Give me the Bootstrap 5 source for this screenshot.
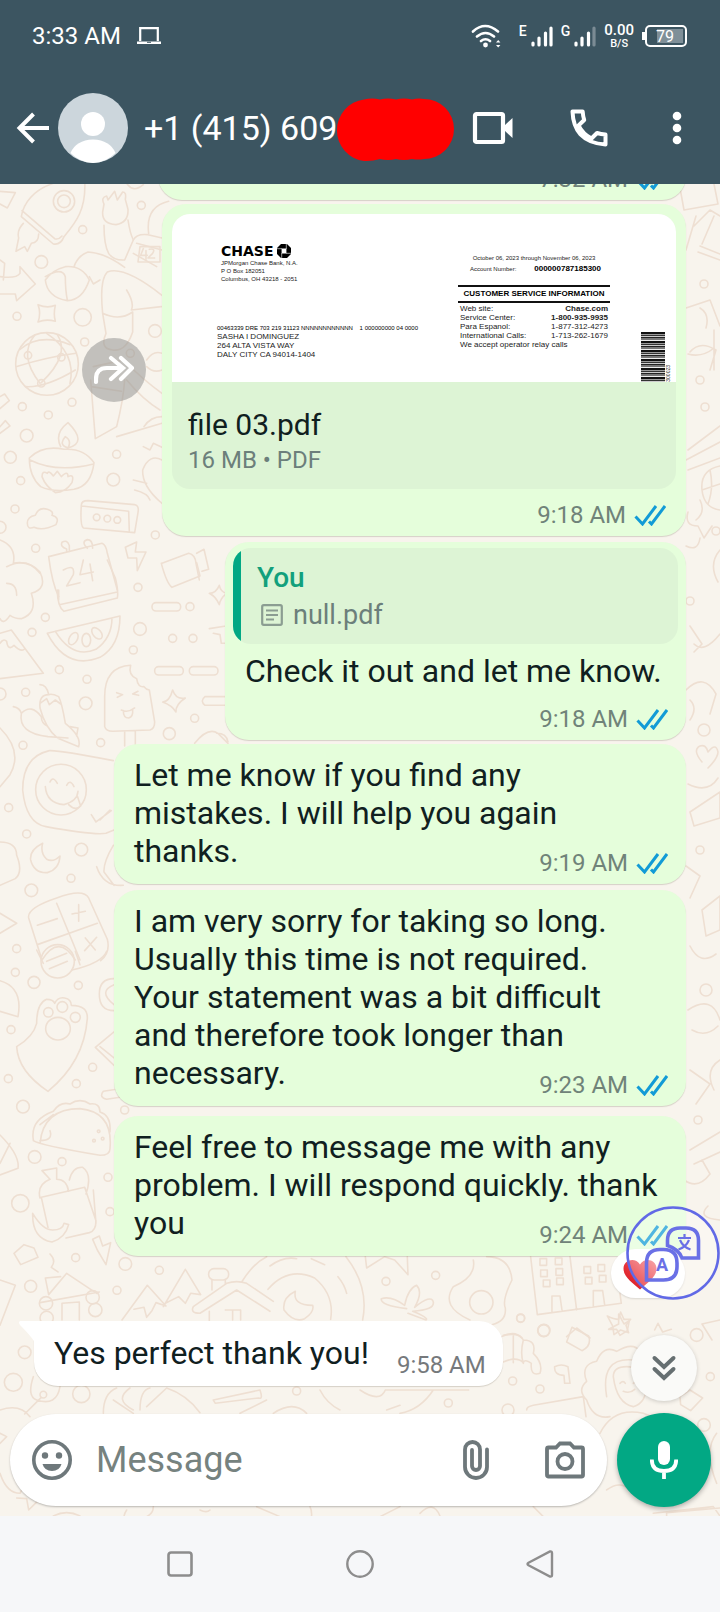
<!DOCTYPE html>
<html lang="en">
<head>
<meta charset="utf-8">
<meta name="viewport" content="width=device-width, initial-scale=1">
<title>Chat</title>
<link href="https://cdn.jsdelivr.net/npm/bootstrap@5.3.0/dist/css/bootstrap.min.css" rel="stylesheet">
<style>
  body { font-family: Roboto, "Liberation Sans", sans-serif; background: #f8f4ed; color: #10201f; }
  svg { display: block; flex-shrink: 0; }
  button { border: 0; background: none; padding: 0; color: inherit; flex-shrink: 0; }
  .top-area { background: #3c5561; color: #fff; }
  .status-row { height: 72px; padding-left: 32px; padding-right: 32px; font-size: 24px; line-height: 28px; }
  .status-row .net { font-size: 14px; line-height: 16px; font-weight: 500; }
  .status-row .rate { font-size: 15px; line-height: 15px; font-weight: 500; }
  .status-row .rate small { font-size: 11px; line-height: 12px; }
  .app-row { height: 112px; padding: 0 38px 0 16px; }
  .phone-no { font-size: 34px; line-height: 40px; font-weight: 400; white-space: nowrap; }
  .redaction { margin: 4px 0 0 -4px; }
  .chat-area { flex: 1 1 0; min-height: 0; }
  .wallpaper { position: absolute; left: 0; top: 0; width: 100%; height: 100%; }
  .messages { padding: 0 34px; gap: 4px; }
  .bubble { position: relative; background: #e5fedb; border-radius: 24px; box-shadow: 0 1px 1px rgba(60,50,30,.18); font-size: 32px; line-height: 38px; max-width: 100%; }
  .bubble-text { padding: 12px 18px 7px 20px; width: 572px; }
  .bubble-text p, .bubble-quote p { margin: 0; white-space: nowrap; }
  .bubble-early { height: 140px; width: 528px; padding: 0 18px 7px; }
  .stamp { font-size: 24px; line-height: 28px; color: #708379; display: flex; justify-content: flex-end; align-items: center; gap: 8px; }
  .bubble-text .stamp { margin-top: -21px; }
  .bubble-file { width: 524px; padding: 10px 10px 7px; }
  .bubble-file .stamp { padding: 12px 10px 0 0; }
  .file-box { background: #ddf4d5; border-radius: 18px; overflow: hidden; }
  .file-info { padding: 23px 16px 14px; }
  .file-title { font-size: 30px; line-height: 40px; }
  .file-kind { font-size: 24px; line-height: 30px; color: #6c7f7b; }
  .bubble-quote { width: 461px; padding: 6px 8px 7px; }
  .bubble-quote > p { padding: 8px 12px 0; }
  .bubble-quote .stamp { padding: 15px 10px 0 0; }
  .quote-box { background: linear-gradient(to right, #02a884 8px, #ddf4d5 8px); border-radius: 18px; padding: 12px 16px 10px 24px; }
  .quote-who { color: #12a07c; font-size: 28px; line-height: 36px; font-weight: 500; }
  .quote-what { color: #6c7f7b; font-size: 27px; line-height: 38px; gap: 10px; }
  .bubble-in { background: #fff; border-top-left-radius: 0; margin: 61px 0 27px; padding: 13px 17px 14px 20px; }
  .bubble-in p { margin: 0; line-height: 38px; }
  .bubble-in .stamp { color: #76797c; margin-bottom: -7px; }
  .tail { position: absolute; left: -16px; top: 0; }
  .gap-two { margin-top: 2px; }
  .gap-six { margin-top: 6px; }

  .paper { background: #fff; color: #222; height: 168px; padding: 29px 5px 0 45px; font-family: "Liberation Sans", Arial, sans-serif; font-size: 6px; line-height: 8px; white-space: nowrap; }
  .brand { font-family: "DejaVu Sans", sans-serif; font-weight: 700; font-size: 14px; line-height: 16px; color: #000; gap: 4px; padding-left: 4px; }
  .paper-left { width: 241px; }
  .paper-right { width: 152px; padding-top: 11px; }
  .mail-code { margin-top: 41px; color: #000; }
  .mail-to { font-size: 8px; line-height: 9px; }
  .account { margin-top: 2px; padding: 0 9px 0 12px; }
  .info-head { font-size: 8px; line-height: 12px; border-top: 2px solid #111; border-bottom: 2px solid #111; margin-top: 12px; text-align: center; font-weight: 700; padding: 1px 0; color: #000; }
  .info-grid { width: 100%; font-size: 8px; line-height: 9px; margin: 1px 0 0; }
  .info-grid th { font-weight: 400; padding: 0 0 0 2px; }
  .info-grid td { padding: 0 2px 0 0; text-align: right; }
  .bars { width: 24px; height: 50px; background: repeating-linear-gradient(#111 0 2px, #999 2px 3px, #333 3px 4px, #ccc 4px 5px, #222 5px 6px, #777 6px 8px, #eee 8px 9px); }
  .bars-no { writing-mode: vertical-rl; transform: rotate(180deg); font-size: 5px; line-height: 6px; }

  .forward-btn { width: 64px; height: 64px; border-radius: 50%; background: rgba(150,150,148,.55); margin-right: 16px; display: grid; place-items: center; }
  .reaction { position: absolute; right: 1px; bottom: -42px; width: 74px; height: 49px; border-radius: 25px; background: #fff; padding: 10px 0 0 12px; box-shadow: 0 1px 2px rgba(0,0,0,.12); }
  .translate-fab { position: absolute; right: -34px; bottom: -44px; width: 94px; height: 94px; }
  .composer { position: relative; padding: 0 9px 9px 10px; gap: 10px; }
  .entry { background: #fff; border-radius: 46px; height: 92px; padding: 0 22px; box-shadow: 0 1px 2px rgba(0,0,0,.25); color: #6e787b; flex: 1 1 0; min-width: 0; }
  .entry input { border: 0; outline: 0; background: none; font-size: 36px; line-height: 42px; flex: 1 1 0; min-width: 0; padding: 0 0 0 24px; color: #10201f; }
  .entry input::placeholder { color: #76827f; opacity: 1; }
  .mic-btn { width: 94px; height: 94px; border-radius: 50%; background: #02a884; color: #fff; box-shadow: 0 2px 5px rgba(0,0,0,.3); display: grid; place-items: center; }
  .down-btn { position: absolute; right: 23px; bottom: 115px; width: 66px; height: 66px; border-radius: 50%; background: #fafaf8; box-shadow: 0 1px 4px rgba(0,0,0,.18); display: grid; place-items: center; color: #666f71; }
  .sys-nav { background: #f6f7f9; height: 96px; padding: 0 93px; color: #8d8d8d; }
  .sys-nav button { width: 174px; display: grid; place-items: center; flex: 0 1 174px; }
</style>
</head>
<body class="vh-100 d-flex flex-column overflow-hidden">

<svg width="0" height="0" class="position-absolute" aria-hidden="true">
  <symbol id="ticks" viewBox="0 0 32 22"><path d="M1.500 12.500l7 7.500L22 2M15 17.500l2.500 2.500L31 2" fill="none" stroke="#129bd6" stroke-width="3"/></symbol>
</svg>

<header class="top-area">
  <div class="status-row d-flex align-items-center">
    <span>3:33 AM</span>
    <svg class="ms-3" width="24" height="18" viewBox="0 0 24 18"><path d="M3.200 14V1.200h17.600V14" fill="none" stroke="#fff" stroke-width="2.200"/><path d="M0 14.500h24V17H0z" fill="#fff"/><path d="M10 15.300h4" stroke="#3c5561"/></svg>
    <div class="ms-auto d-flex align-items-center">
      <svg width="32" height="24" viewBox="0 0 32 24"><g fill="none" stroke="#fff" stroke-width="2.600" stroke-linecap="round"><path d="M2 7.500q12-11 25 0M6 12.500q8.500-7 17 0M10 17q4.500-3.500 9 0"/></g><circle cx="14.500" cy="21" r="2.400" fill="#fff"/><path d="M25 18.500l2.200-2.500 2.200 2.500zM25 21l2.200 2.500 2.200-2.500z" fill="#fff"/></svg>
      <span class="net align-self-start ms-3">E</span>
      <svg class="ms-1" width="22" height="22" viewBox="0 0 22 22"><path d="M2 20v-2M8 20v-7M14.500 20V8M20 20V3" stroke="#fff" stroke-width="3.200" stroke-linecap="round"/></svg>
      <span class="net align-self-start ms-2">G</span>
      <svg class="ms-1" width="22" height="22" viewBox="0 0 22 22"><path d="M2 20v-2M8 20v-7M14.500 20V8" stroke="#fff" stroke-width="3.200" stroke-linecap="round"/><path d="M20 20V3" stroke="#7b8b94" stroke-width="3.200" stroke-linecap="round"/></svg>
      <span class="rate text-center ms-2 d-flex flex-column">0.00<small>B/S</small></span>
      <svg class="ms-2" width="46" height="22" viewBox="0 0 46 22"><rect x="4" y="1" width="40" height="20" rx="4" fill="none" stroke="#fff" stroke-width="2"/><path d="M1.500 7v8" stroke="#fff" stroke-width="3"/><path d="M15 4h26v14H15z" fill="#7f8f98"/><text x="23" y="17" text-anchor="middle" font-size="16" fill="#fff">79</text></svg>
    </div>
  </div>
  <div class="app-row d-flex align-items-center">
    <button aria-label="Back"><svg width="34" height="34" viewBox="0 0 34 34"><path d="M17.500 3L3.500 17l14 14M3.500 17H33" fill="none" stroke="#fff" stroke-width="4"/></svg></button>
    <svg class="ms-2" width="70" height="70" viewBox="0 0 70 70"><circle cx="35" cy="35" r="35" fill="#ccd6dc"/><circle cx="35" cy="31" r="12" fill="#fff"/><path d="M12.500 60Q18 47 35 46.500 52 47 57.500 60 48 69.500 35 70 22 69.500 12.500 60z" fill="#fff"/></svg>
    <h1 class="phone-no mb-0 ms-3">+1 (415) 609</h1>
    <svg class="redaction" width="122" height="64" viewBox="0 0 122 64" aria-hidden="true"><path d="M31 1.500q8-2 16 0 8-2 16 0 8-2 16 0 6-1.500 12-.5A30 30 0 0 1 91 61q-6 1-12 0-8 2-16 0-8 2-16 0-8 2.500-16 2A31 31 0 0 1 31 1.500z" fill="#f00"/></svg>
    <button class="ms-auto" aria-label="Video call"><svg width="42" height="34" viewBox="0 0 42 34"><rect x="3" y="3" width="28" height="28" rx="1.500" fill="none" stroke="#fff" stroke-width="4.200"/><path d="M32 15l8.500-8v20L32 19z" fill="#fff"/></svg></button>
    <button class="ms-5 ps-2" aria-label="Call"><svg width="38" height="38" viewBox="0 0 38 38"><path d="M2.500 2.500h10.200q.3 5 1.500 8.500L8.500 16.500Q13 25.500 21.500 29.500L27 24q4 1.300 8.500 1.500v10Q19 34.500 10.500 25.500 3 17 2.500 2.500z" fill="none" stroke="#fff" stroke-width="4" stroke-linejoin="round"/></svg></button>
    <button class="ms-5 ps-3" aria-label="More options"><svg width="10" height="34" viewBox="0 0 10 34"><g fill="#fff"><circle cx="5" cy="5" r="4.300"/><circle cx="5" cy="17" r="4.300"/><circle cx="5" cy="29" r="4.300"/></g></svg></button>
  </div>
</header>

<main class="chat-area position-relative overflow-hidden d-flex flex-column justify-content-end">
  <svg class="wallpaper" viewBox="0 184 720 1332" preserveAspectRatio="xMidYMin slice" aria-hidden="true">
    <g fill="none" stroke="#eedfd2" stroke-width="4.800" stroke-linejoin="round" stroke-linecap="round">
      <!-- rocket, athlete, globe, lamp, cloud -->
      <g transform="translate(0 180) scale(.3333)">
        <path d="M160 10C100 30 70 70 64 110L160 192Q182 196 192 170C225 130 260 90 254 0M66 92l98 84q12 4 22-8M70 130q-20 20-14 44l-8 40 26-14 8 14 12-24q22-2 22-28"/>
        <circle cx="192" cy="64" r="32"/><circle cx="192" cy="64" r="19"/><circle cx="248" cy="149" r="12"/><circle cx="424" cy="76" r="12"/>
        <path d="M0 34l46 4-24 46-22-12M380 10q20 30 50 4M312 72q-10-20 8-24l4 12 20-26 8 26 16-24q12 0 8 22l8 30q2 40-36 46-42-2-40-38zM312 136q0 60 14 84 14 22 48 20l26-60q-10-20-16-60"/>
        <path d="M400 180q10-20 44-16l42 10M410 190l76 20M400 220l70 40M374 262q-60-44-110-46-30 10-42 44M136 300q20-30 60-40 50-4 72 40-20 60-66 62-60-10-66-62zM136 290q50-30 60 0 0 40 6 70"/>
        <path d="M268 290l12 22 20-12M308 400q-10-100 14-124 50-20 164 70M380 330q24 40 14 60l90-10M308 400q50 24 90-4v60q-20 60-60 54-40-4-20-50l-10-60M446 160q-10-80 60-96M420 200h60v46h-66zM430 206l-8 20h20m-4-14v26m10-30q20-4 10 12l-14 14h20"/>
        <circle cx="124" cy="246" r="19"/><path d="M0 290q50 6 60-10l0-20 46 52-56 50-4-20H0M0 240l14 10-4 50"/>
        <path d="M114 374q28 12 52 2-6 26 0 48-28-8-52 2 10-26 0-52z"/><circle cx="51" cy="409" r="12"/><circle cx="248" cy="412" r="26"/><circle cx="465" cy="453" r="19"/><circle cx="254" cy="486" r="12"/><circle cx="391" cy="520" r="12"/>
        <circle cx="141" cy="552" r="94"/><path d="M60 508q60-50 150-14M48 560q100-30 180-40M76 620q60 4 150-50M104 466q-50 60 16 144M172 464q40 60-48 144M140 460q90 60 70 150"/><circle cx="84" cy="526" r="11"/><circle cx="184" cy="532" r="11"/><circle cx="124" cy="610" r="11"/>
        <path d="M280 560l90-20q60 60 116 100M272 600l14 176 64-36q20-80 24-140M274 620l90 14M350 770l136-40M380 600q50 60 100 90M440 540q20-30 46-20M440 560q20 20 46 10"/>
        <circle cx="67" cy="680" r="12"/><circle cx="216" cy="667" r="12"/><circle cx="145" cy="705" r="12"/><circle cx="80" cy="767" r="19"/><circle cx="31" cy="832" r="18"/><circle cx="62" cy="902" r="12"/><circle cx="350" cy="823" r="12"/><circle cx="45" cy="987" r="12"/><circle cx="466" cy="1065" r="12"/><circle cx="107" cy="1105" r="12"/><circle cx="0" cy="1042" r="18"/>
        <path d="M0 650l14-8 14 20-28 24M0 740l16-18 14 16-30 22M182 800q-20-40 22-72 60 60 0 76q-30-10-8-34 20 12 8 34M88 834q40-40 104-26 60-4 90 40-8 70-60 80-64 10-100-8-34-30-34-86zM90 840q80 40 190 12M126 890q0-20 16-10 4-10 18 8l12-14 12 16q20-20 20 0 20-10 12 18-20 30-50 30-30-20-40-48z"/>
        <circle cx="340" cy="899" r="19"/><path d="M486 970q-60-50-58-100 20-50 58-30M400 900l40 10M404 930q40 10 46 30M430 800l20 10 10-20 26 12M432 740q20-30 54-30"/>
        <path d="M82 1030q0-20 24-24 10-26 36-18 20 6 14 18 24 6 12 28-40 20-66 8-20 8-20-12zM244 976q0-14 20-14l140 12q14 2 10 24l-10 60-154-14q-10-8-6-68zM246 978l140 16 2 60"/><circle cx="290" cy="1012" r="10"/><circle cx="322" cy="1016" r="10"/><circle cx="352" cy="1020" r="10"/>
        <path d="M0 1080q50 20 40 70 50-10 80 30M146 1130l160-40q12 4 16 30l30 110M146 1130q10 80 30 120M200 1115v-8q-20-6-14-20 16-10 22 10v18M262 1105q-20-20 0-26 16 0 16 26M376 1102l34-16-4 30h32l-26 56-2-38h-26zM486 1150l80-30q20 4 22 30l10 50M590 1120l22-12 14 60-20 6"/>
      </g>
      <!-- calendar, melon, lolly, chillies, calculator -->
      <g transform="translate(0 560) scale(.3333)">
        <path d="M20 20q60-30 100 16 24 50-26 64 20 60-30 76-20 0-34-10-20 30-30 10M20 70q30 0 30 36M0 220l34-10 96 130L0 356M0 250q10-16 20-6 4 30 22 12 20 20 30 12M172 90q0 50 20 64l160-40q4-20-6-60l-24-54M178 134l174-38M176 90l0 30M190 30q36-20 30 14l-20 34 40-10M250 0l-10 44 40-8m-10-24l8 50"/>
        <path d="M142 220l218-52q0 90-60 124-100 40-158-72zM166 214l170-40q0 60-48 94-70 30-122-54"/><ellipse cx="220" cy="236" rx="12" ry="20" transform="rotate(30 220 236)"/><ellipse cx="259" cy="240" rx="13" ry="20"/><ellipse cx="291" cy="220" rx="12" ry="20" transform="rotate(-40 291 220)"/>
        <circle cx="414" cy="82" r="12"/><circle cx="136" cy="172" r="12"/><circle cx="96" cy="217" r="12"/><circle cx="420" cy="207" r="19"/><circle cx="400" cy="270" r="12"/><circle cx="178" cy="329" r="12"/><circle cx="261" cy="358" r="12"/><circle cx="77" cy="397" r="12"/><circle cx="257" cy="430" r="19"/><circle cx="570" cy="140" r="12"/><circle cx="518" cy="235" r="12"/><circle cx="579" cy="235" r="12"/><circle cx="584" cy="475" r="12"/><circle cx="508" cy="521" r="18"/><circle cx="302" cy="548" r="12"/><circle cx="69" cy="556" r="12"/><circle cx="0" cy="402" r="18"/>
        <rect x="456" y="128" width="86" height="25" rx="12"/><rect x="464" y="320" width="86" height="25" rx="12"/><rect x="568" y="320" width="86" height="25" rx="12"/><path d="M675 410h-60q-16 13 0 26h60M484 10q16 60 32 72l84-34-10-40M628 100q20 0 30-24 4 20 22 24-20 16-22 34-10-24-30-34zM628 206l50-8M640 220l20 4 4 26 14 0M488 426q20 0 30-36 10 30 38 24-30 20-28 42-12-20-40-30z"/>
        <path d="M314 500l0-90q0-90 78-94-8 30 18 40 4 28 22 24 6 8 16 10l16 96q0 20-14 24l-112 4q-20 0-24-14zM374 516v42M406 514v44M350 398l18 6-16 8M414 394l-16 8 18 4M364 450q20 10 40-6M370 452q0 22 16 22 14-4 12-24M584 550q40-50 70-30l30 30M650 520q30 0 34 26"/>
        <path d="M40 440q20 4 24 20-10 60 80 70l60 4M64 460q30-30 60 10 0 20 20 30M120 374q20 0 26 30-30 0-26 40 16 60 52 90l64 26q10-30-40-70-10-60-20-80-20-10-30-6M120 430l20-14 8 18 18-14 16 12M210 500l24 4-4 24"/>
        <path d="M0 504q70 70 30 140L0 680M68 690q0-100 80-118 30-2 192 30M68 690q10 100 70 110 140 26 180 20l24-10"/><circle cx="183" cy="689" r="76"/><path d="M136 680q4 50 56 54 40-10 42-40M150 666q8-20 22 4M200 676q10-20 22 4M206 734q20 20 36 4l-10-30M274 764l14 22 46-34M300 780l30-30"/>
        <circle cx="26" cy="743" r="12"/><circle cx="80" cy="822" r="12"/><circle cx="244" cy="869" r="19"/><circle cx="213" cy="955" r="12"/><circle cx="94" cy="991" r="19"/><circle cx="50" cy="1166" r="12"/>
        <path d="M128 850q-40 20-36 50 10 40 50 38 36-10 38-50-20 20-40 10-20-20-12-48zM0 846q50 0 50 40 20 50-4 70l-46 20M340 856q-30 50-28 80l30 40M290 920q20 60 80 56M0 1060l50 30-50 30M170 1014q80-30 96 0l56 124q10 40-20 64M170 1014q-90 30-84 60l40 126M170 1030l70 170M112 1154l180-64M112 1096l60-20M236 1034l0 50M216 1062l40-8M256 1134l30 36M254 1172l36-40M126 1200q50-80 100 0"/>
      </g>
      <!-- paw shield, taco, groceries, winter houses -->
      <g transform="translate(0 950) scale(.3333)">
        <circle cx="173" cy="34" r="50"/><path d="M140 34l60-24M148 56l54-22M110 0l20 40M216 60q90-20 104-56M240 44l-14-40"/><circle cx="46" cy="67" r="12"/><circle cx="102" cy="97" r="18"/><circle cx="235" cy="106" r="12"/><path d="M0 92q70 20 54 108l-54-16M342 86q-44 0-44 46 0 50 44 50M342 104q-50 20 0 60"/>
        <path d="M110 220q0-60 30-72 20 0 24 12 10-20 30-16 20 4 20 22 50 0 48 40-10 130-118 218-90-60-94-134 50-30 60-70z"/><ellipse cx="174" cy="236" rx="37" ry="34"/><circle cx="145" cy="187" r="14"/><circle cx="187" cy="171" r="16"/><circle cx="226" cy="202" r="15"/>
        <circle cx="33" cy="239" r="12"/><circle cx="25" cy="386" r="12"/><circle cx="278" cy="352" r="12"/><circle cx="229" cy="401" r="12"/><circle cx="69" cy="470" r="19"/><circle cx="374" cy="480" r="12"/><circle cx="104" cy="621" r="19"/><circle cx="186" cy="635" r="12"/><circle cx="324" cy="682" r="12"/><circle cx="61" cy="760" r="26"/><circle cx="330" cy="785" r="12"/><circle cx="227" cy="923" r="12"/><circle cx="376" cy="942" r="19"/><circle cx="478" cy="961" r="12"/><circle cx="92" cy="1009" r="18"/><circle cx="351" cy="1021" r="12"/>
        <path d="M342 246l-56 46 56 54M300 290l42 34M350 418l-40 6q-14 18 10 24l40-6M100 570q-10-60 60-86 20-30 50-22 30-20 60 0 30-4 30 24 34 10 30 60M100 572q20 14 200 44 30 0 30-20 10-110-90-120-110 0-120 104M120 524l40-30M120 572q40 0 30-30M0 555q60 60 54 100l-54 20M0 640l30-60"/><circle cx="296" cy="544" r="4"/><circle cx="282" cy="572" r="4"/><circle cx="308" cy="566" r="4"/>
        <path d="M124 742l130-30 34 100q0 30-20 36l-70 16M120 744q-10-40 30-56l-24-26 44-8 0 34q30 0 36 36M208 690q10-40 40-38 30 20 10 80M124 742l20 90M280 720l8 100M98 790q30 50 60 50 30 0 34-20l14 4q-10 40-50 52-60-10-58-86zM278 868l20-10 10 30 24-10-14 66-26-44zM42 910l30-26 30 10 12 28-52 22zM150 912q20 20 4 40l20 14M136 984l10 50 54-64 90 60M136 984l46-4M120 1058l178-32M0 990l46 16-46 120"/><circle cx="138" cy="1060" r="20"/><circle cx="278" cy="1042" r="20"/><circle cx="140" cy="1104" r="20"/><circle cx="286" cy="1080" r="20"/><path d="M186 1110v-50l52-4v54"/>
        <path d="M366 1110l76-104 56 62-30-10-12 24-16 20-8-30-30 6M490 1070l66-112 46 76-30-4-16 30-20-20-40 20M636 990v30M676 988v14M580 1070q-10 20 20 20l110-70 100 64M580 1070l100-70q30-10 60 0l80 54M628 1084v30M676 1080h46v30M698 1080v30"/><rect x="626" y="956" width="60" height="34" rx="16"/>
      </g>
      <!-- moon ring, star, flower, fried egg, hotel -->
      <g transform="translate(200 1240) scale(.3333)">
        <path d="M125 126Q160 70 200 50M438 50q70 90 50 190M204 148q60-70 140-34 60 50 48 124M210 78q40-30 80-22M334 56l40 18M414 110q20 24 26 50M286 154q-40 20-34 56 30 40 62 26 30-20 24-40-60 0-52-42zM496 50l4 34 54-34 30 10 40 44-2-54M620 206q-80-10-76-30 30-10 70 20 10-50 36-60 20 20-6 66 50-40 56-16 4 24-62 28 50 20 40 26l-54-20M860 50q70 0 76 70-30 60-20 84 4 40-40 50M820 60q10 50-60 80-40 60 50 100"/><circle cx="558" cy="124" r="12"/><circle cx="707" cy="106" r="12"/><circle cx="844" cy="187" r="35"/><circle cx="962" cy="235" r="12"/><circle cx="1031" cy="272" r="18"/>
        <path d="M992 50l20 174 252-34-4-30M1110 50l20 160M1056 216v-48h24l6 42M1180 200v-48h28l6 42M1020 56h20v20h-20zM1066 54h20v20h-20zM1022 90h20v20h-20zM1068 86h20v20h-20zM1030 120h20v20h-20zM1070 114h20v20h-20zM1152 80h20v20h-20zM1194 74h20v20h-20zM1156 112h20v20h-20zM1198 106h20v20h-20zM1222 228q20 10 34 10l6-22 10 22 20 0-14 18 8 22-24-8-20 14-4-26zM1100 290l30-26 40 30M905 290q40-20 60 4"/>
      </g>
      <!-- croissant, singer, envelopes round the entry box -->
      <g transform="translate(360 1300) scale(.3333)">
        <path d="M430 106q50-10 60 14 40 0 30 40 30 30 20 60-30 10-26-30-20-14-24-2-20-20-60-2M460 108v80M490 120q-10 40 0 70M584 200q20-10 40 0l6 50h-16l-2-24q-30 0-28-26zM636 82l50 26q10 30-20 44l-46-26zM746 88l30-16 0-30 16 30 16-10-6 30-22 14-10-18zM884 90l10-20 14 26 26-8"/><circle cx="482" cy="54" r="12"/><circle cx="552" cy="91" r="18"/><circle cx="1010" cy="105" r="19"/><circle cx="458" cy="243" r="12"/><circle cx="540" cy="267" r="12"/><circle cx="265" cy="309" r="12"/><circle cx="444" cy="330" r="18"/><circle cx="1051" cy="230" r="12"/><circle cx="1032" cy="375" r="19"/>
        <path d="M680 300q-30-30 0-56-20-50 30-60 20-50 60-30 50-30 70 0M680 300q20 60 70 50M500 330q0-10 20-14l150-26 8 60M740 290q-20-120 80-110M760 230q10 80 60 90 40-10 40-70-20-50-60-50-40 0-40 30zM780 250q10-10 16 0M820 250q10-10 16 0M790 274q20 8 34-6M720 400q40-80 130-60l50 20M0 270q60 40 76 0h250M80 330l40-14M120 340q60-10 100-70M960 290l30-20 38 24-36 38-30-18zM740 570q40-30 70 0l60 40M520 620l30 30M880 640l180-20 20 28M920 648v-10l160-14M1070 400q-40 50 0 150M60 650l60-30M180 640q40-40 60 8"/>
      </g>
      <g transform="translate(0 1300) scale(.3333)">
        <circle cx="40" cy="247" r="27"/><circle cx="244" cy="282" r="26"/><circle cx="74" cy="157" r="19"/><circle cx="130" cy="284" r="10"/><circle cx="890" cy="273" r="12"/><path d="M100 230q-20 60 10 70 60 20 70-40M124 292l-50 50M0 330q60-20 90 20M310 340q0-60 40-76M400 330q-60-30-10-66M420 330q0-60 30-66M440 320l60-56q60 20 100 74M340 300l60 40M640 300l140-30q10 30-4 24l-130 16zM720 340q40-20 80-40M820 340q60-40 100 0M960 270q20 40 60 60M0 400l20 10-20 20M0 520q20 60 60 60l10-20M50 594l30 2 6 34 26-26M380 630q-20 30 10 40M440 650q20-10 20-30M600 630q20 10 30 0M770 620l70 30M930 620q10 20 0 50M160 648q40-20 80 0"/>
      </g>
      <!-- books, palm, basketball and hearts down the right margin -->
      <g stroke-width="1.600">
        <path d="M680 188l4 22 34-6-4-20M694 226l16-16 10 6M686 250l10-34M698 252l22 8M702 244l12-28M700 246l20 8M686 308l24-8 10 26M706 328q4-14-6-20M690 352q10-12 26-2l-6 20M688 354q14 4 26-6M714 370v-40M688 450l32-24M686 460l34-18M688 470l32-12M720 466q-20 4-18 24 2 18 18 20M702 490l18-6M710 470q4 18-2 34M688 512q-4 14 10 14l6 12 8-12M696 520q10-8 4-20M686 546q12 6 14-8M720 550q-12 14-2 32M690 626l12 18-8 8M694 644q10 10 26-10M686 690q18-18 30 4l-6 20M690 700q8 8 0 20M702 762q-10-12-2-16 6-2 8 6 8-10 10 0 0 6-10 16M688 784q20 10 30-6M690 812l30-20v26l-26 8zM686 866l14 10-10 22M702 910l18-14v34l-14 6zM690 946q10 20 26 8M688 1010q24-16 32 10M692 1030q14 8 26-4M690 1070l20 14-14 20M720 1060q-16 10-6 30M690 1150l30-18M694 1164l26-12M684 1180q14 10 26-6l-8-14M708 1206q-12 12 12 14M712 1340l-10-16 18-4"/>
        <circle cx="704" cy="284" r="4"/><circle cx="700" cy="380" r="4"/><circle cx="705" cy="407" r="4"/><circle cx="716" cy="531" r="4"/><circle cx="690" cy="601" r="4"/><circle cx="704" cy="730" r="6"/><circle cx="700" cy="850" r="4"/><circle cx="706" cy="990" r="6"/><circle cx="698" cy="1120" r="4"/>
      </g>
    </g>
  </svg>

  <section class="messages d-flex flex-column align-items-end position-relative" aria-label="Messages">
    <article class="bubble bubble-early d-flex flex-column justify-content-end">
      <div class="stamp">7:32 AM <svg width="32" height="22"><use href="#ticks"/></svg></div>
    </article>

    <div class="d-flex align-items-center mw-100">
      <button class="forward-btn" aria-label="Forward"><svg width="40" height="30" viewBox="0 0 40 30"><path d="M2 27v-3Q2 13 13 13h15M17 3l12 10-12 11M27 3l11 10-11 11" fill="none" stroke="#fff" stroke-width="4.200" stroke-linecap="round"/></svg></button>
      <article class="bubble bubble-file">
        <div class="file-box">
          <div class="paper d-flex">
            <div class="paper-left">
              <div class="brand d-flex align-items-center">CHASE <svg width="14" height="14" viewBox="0 0 14 14"><path d="M4 0h6l4 4v6l-4 4H4l-4-4V4z"/><path d="M4.600 4.600h4.800v4.800H4.600z" fill="#fff"/><path d="M0 4.700h5M9.300 0v5M14 9.300H9M4.700 14V9" stroke="#fff" stroke-width=".6"/></svg></div>
              <div class="ps-1">JPMorgan Chase Bank, N.A.<br>P O Box 182051<br>Columbus, OH 43218 - 2051</div>
              <div class="mail-code">00463339 DRE 703 219 31123 NNNNNNNNNNNN &nbsp; &nbsp;1 000000000 04 0000</div>
              <div class="mail-to">SASHA I DOMINGUEZ<br>264 ALTA VISTA WAY<br>DALY CITY CA 94014-1404</div>
            </div>
            <div class="paper-right">
              <div class="text-center">October 06, 2023 through November 06, 2023</div>
              <div class="account d-flex justify-content-between align-items-center"><span>Account Number:</span><b class="text-black mail-to">000000787185300</b></div>
              <div class="info-head">CUSTOMER SERVICE INFORMATION</div>
              <table class="info-grid">
                <tr><th>Web site:</th><td><b>Chase.com</b></td></tr>
                <tr><th>Service Center:</th><td><b>1-800-935-9935</b></td></tr>
                <tr><th>Para Espanol:</th><td>1-877-312-4273</td></tr>
                <tr><th>International Calls:</th><td>1-713-262-1679</td></tr>
                <tr><th colspan="2">We accept operator relay calls</th></tr>
              </table>
            </div>
            <div class="ms-auto d-flex align-items-end"><div class="bars"></div><span class="bars-no">300023</span></div>
          </div>
          <div class="file-info">
            <div class="file-title">file 03.pdf</div>
            <div class="file-kind">16 MB • PDF</div>
          </div>
        </div>
        <div class="stamp">9:18 AM <svg width="32" height="22"><use href="#ticks"/></svg></div>
      </article>
    </div>

    <article class="bubble bubble-quote gap-two">
      <div class="quote-box">
        <div class="quote-who">You</div>
        <div class="quote-what d-flex align-items-center"><svg class="ms-1" width="22" height="22" viewBox="0 0 22 22"><rect x="1.200" y="1.200" width="19.600" height="19.600" rx="1.500" fill="none" stroke="#8b9d92" stroke-width="2.200"/><path d="M5 6.500h12M5 11h12M5 15.500h8" stroke="#8b9d92" stroke-width="2"/></svg>null.pdf</div>
      </div>
      <p>Check it out and let me know.</p>
      <div class="stamp">9:18 AM <svg width="32" height="22"><use href="#ticks"/></svg></div>
    </article>

    <article class="bubble bubble-text">
      <p>Let me know if you find any<br>mistakes. I will help you again<br>thanks.</p>
      <div class="stamp">9:19 AM <svg width="32" height="22"><use href="#ticks"/></svg></div>
    </article>

    <article class="bubble bubble-text gap-two">
      <p>I am very sorry for taking so long.<br>Usually this time is not required.<br>Your statement was a bit difficult<br>and therefore took longer than<br>necessary.</p>
      <div class="stamp">9:23 AM <svg width="32" height="22"><use href="#ticks"/></svg></div>
    </article>

    <article class="bubble bubble-text gap-six">
      <p>Feel free to message me with any<br>problem. I will respond quickly. thank<br>you</p>
      <div class="stamp">9:24 AM <svg width="32" height="22"><use href="#ticks"/></svg></div>
      <div class="reaction"><svg width="34" height="31" viewBox="0 0 34 31" role="img" aria-label="Heart"><defs><linearGradient id="hg" x1="0" y1="1" x2="1" y2="0"><stop offset="0" stop-color="#d3121c"/><stop offset=".45" stop-color="#e8343b"/><stop offset="1" stop-color="#f58488"/></linearGradient></defs><path d="M17 30.500C10 24 .5 18.500.5 9.500.5 1 12-2.500 17 5.500 22-2.500 33.500 1 33.500 9.500 33.500 18.500 24 24 17 30.500z" fill="url(#hg)"/></svg></div>
      <button class="translate-fab" aria-label="Translate"><svg width="94" height="94" viewBox="0 0 94 94"><circle cx="47" cy="47" r="45.500" fill="#fff" fill-opacity=".26" stroke="#6169e6" stroke-width="2.600"/><g fill="none" stroke="#6a70e6" stroke-width="3.600"><path d="M20.500 74V57q0-13.500 13.500-13.500h3.500Q51 43.500 51 57v3.500Q51 74 37.500 74z"/><path d="M41.500 39.500v-5Q41.500 22 54 22h6q12.500 0 12.500 12.500V52H56q-3-8.500-14.500-12.500z"/></g><path d="M52 32h13M58.500 28v4M54 34q3 7 10.500 9.500M63 34q-3 7-10.500 9.500" fill="none" stroke="#6a70e6" stroke-width="2.200"/><text x="36" y="65" text-anchor="middle" font-size="18" font-weight="700" fill="#6a70e6">A</text></svg></button>
    </article>

    <article class="bubble bubble-in align-self-start d-flex align-items-end">
      <svg class="tail" width="18" height="24" viewBox="0 0 18 24"><path d="M2 0h16v24Q16 18 2 4 0 1 2 0z" fill="#fff"/></svg>
      <p>Yes perfect thank you!</p>
      <div class="stamp ms-4 ps-1">9:58 AM</div>
    </article>
  </section>

  <form class="composer d-flex align-items-center">
    <button type="button" class="down-btn" aria-label="Scroll to latest"><svg width="26" height="28" viewBox="0 0 26 28"><path d="M3.500 4L13 13l9.500-9M3.500 15L13 24l9.500-9" fill="none" stroke="currentColor" stroke-width="4" stroke-linecap="round"/></svg></button>
    <div class="entry d-flex align-items-center">
      <button type="button" aria-label="Emoji"><svg width="40" height="40" viewBox="0 0 40 40"><circle cx="20" cy="20" r="18.200" fill="none" stroke="currentColor" stroke-width="3.600"/><g fill="currentColor"><circle cx="13" cy="15.500" r="3.200"/><circle cx="27" cy="15.500" r="3.200"/><path d="M10.500 24h19q-2 7-9.500 7t-9.500-7z"/></g></svg></button>
      <input type="text" placeholder="Message" aria-label="Message">
      <button type="button" class="me-5" aria-label="Attach"><svg width="26" height="40" viewBox="0 0 26 40"><path d="M24 9.500V27a11 11 0 0 1-22 0V9.500a7.500 7.500 0 0 1 15 0V26a4 4 0 0 1-8 0V10" fill="none" stroke="currentColor" stroke-width="3.800" stroke-linecap="round"/></svg></button>
      <button type="button" class="ms-2" aria-label="Camera"><svg width="40" height="38" viewBox="0 0 40 38"><path d="M3.500 6.500H11L15 2.500h10l4 4h7.500q1.500 0 1.500 1.500v26q0 1.500-1.500 1.500h-33Q2 35.500 2 34V8q0-1.500 1.500-1.500z" fill="none" stroke="currentColor" stroke-width="3.800"/><circle cx="20" cy="20.500" r="7.500" fill="none" stroke="currentColor" stroke-width="3.800"/></svg></button>
    </div>
    <button type="button" class="mic-btn" aria-label="Record voice message"><svg width="28" height="38" viewBox="0 0 28 38"><rect x="8" y="0" width="12" height="24" rx="6" fill="#fff"/><path d="M1.800 18.500q0 11.500 12.200 11.500t12.200-11.500M14 30v8" fill="none" stroke="#fff" stroke-width="3.800"/></svg></button>
  </form>
</main>

<nav class="sys-nav d-flex align-items-center justify-content-between" aria-label="System">
  <button aria-label="Recent apps"><svg width="26" height="26" viewBox="0 0 26 26"><rect x="1.500" y="1.500" width="23" height="23" rx="2.500" fill="none" stroke="currentColor" stroke-width="2.600"/></svg></button>
  <button aria-label="Home"><svg width="28" height="28" viewBox="0 0 28 28"><circle cx="14" cy="14" r="12.700" fill="none" stroke="currentColor" stroke-width="2.400"/></svg></button>
  <button aria-label="Back"><svg width="28" height="28" viewBox="0 0 28 28"><path d="M2.500 12.800L24 1.500q2-.5 2 1.500v22q0 2-2 1.500L2.500 15.200q-2-1.200 0-2.400z" fill="none" stroke="currentColor" stroke-width="2.400"/></svg></button>
</nav>

<script src="https://cdn.jsdelivr.net/npm/bootstrap@5.3.0/dist/js/bootstrap.bundle.min.js"></script>
</body>
</html>
